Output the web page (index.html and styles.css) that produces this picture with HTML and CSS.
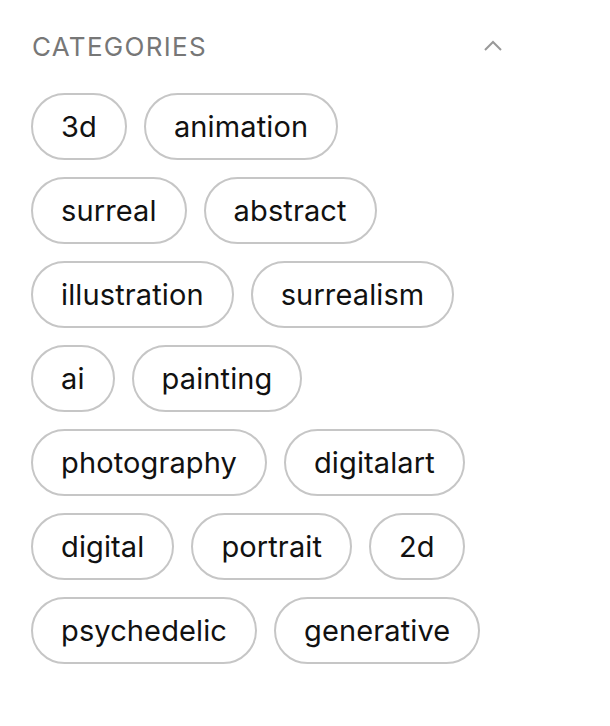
FILE: index.html
```html
<!DOCTYPE html>
<html>
<head>
<meta charset="utf-8">
<link rel="stylesheet" href="styles.css">
</head>
<body>
<section class="panel">
  <div class="header">
    <h2 class="title">CATEGORIES</h2>
    <svg class="chevron" width="20" height="12" viewBox="0 0 20 12"><path d="M2 10 L10 2 L18 10" fill="none" stroke="#999" stroke-width="2"/></svg>
  </div>
  <div class="tags">
    <span class="tag">3d</span>
    <span class="tag">animation</span>
    <span class="tag">surreal</span>
    <span class="tag">abstract</span>
    <span class="tag">illustration</span>
    <span class="tag">surrealism</span>
    <span class="tag">ai</span>
    <span class="tag">painting</span>
    <span class="tag">photography</span>
    <span class="tag">digitalart</span>
    <span class="tag">digital</span>
    <span class="tag">portrait</span>
    <span class="tag">2d</span>
    <span class="tag">psychedelic</span>
    <span class="tag">generative</span>
  </div>
</section>
</body>
</html>
```
FILE: styles.css
```css
html, body {
  margin: 0;
  padding: 0;
  background: #fff;
}
.panel {
  width: 474px;
  padding: 28px 0 0 31px;
  font-family: Inter, "Liberation Sans", sans-serif;
}
.header {
  display: flex;
  align-items: center;
  justify-content: space-between;
  height: 36px;
  margin-bottom: 29px;
  padding-left: 1px;
}
.title {
  margin: 0;
  font-size: 26px;
  font-weight: 400;
  color: #777;
  letter-spacing: 1.3px;
}
.chevron {
  margin-right: 2px;
}
.tags {
  display: flex;
  flex-wrap: wrap;
  gap: 17px 17px;
}
.tag {
  display: flex;
  align-items: center;
  height: 63px;
  padding: 0 28px;
  border: 2px solid #c6c6c6;
  border-radius: 34px;
  font-size: 29px;
  color: #111;
  letter-spacing: 0.12px;
}
```
